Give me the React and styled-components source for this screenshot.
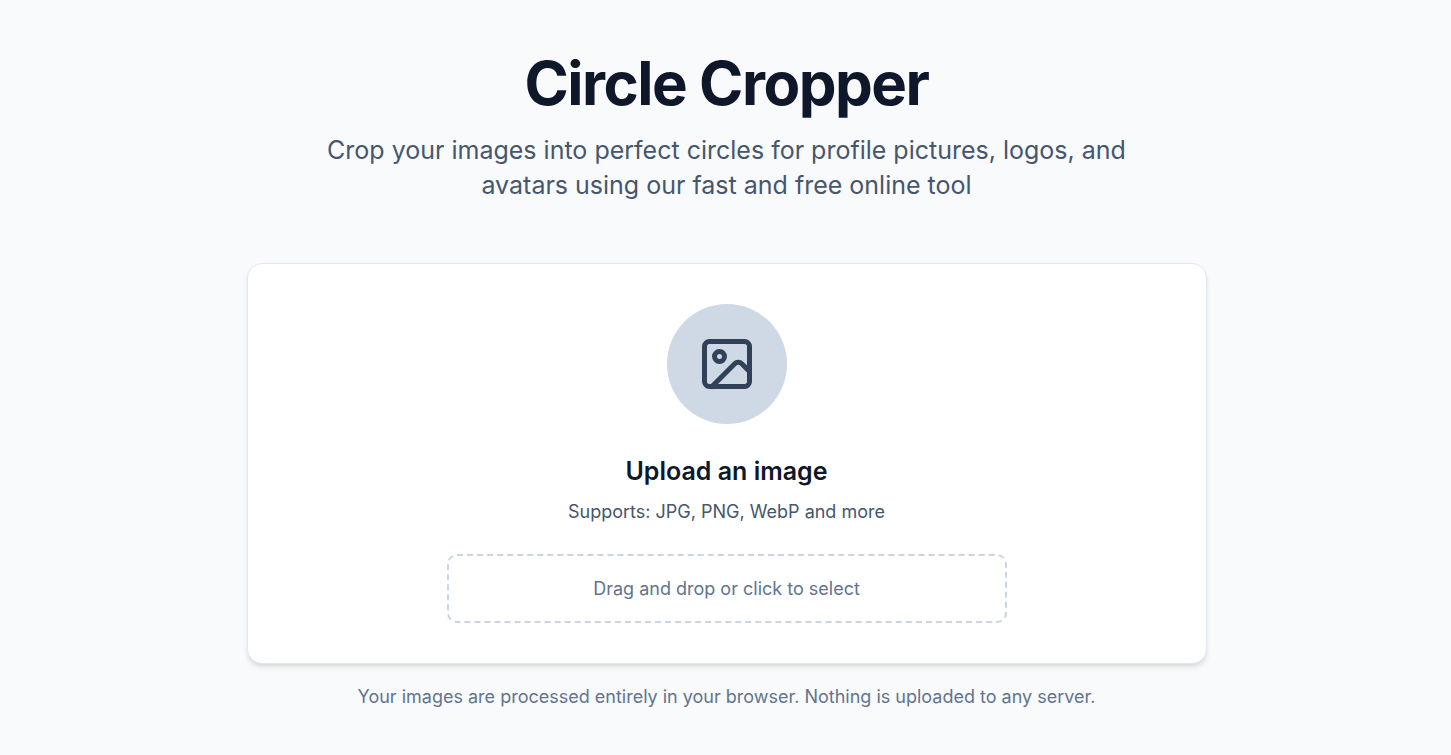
import React from "react";
import styled, { createGlobalStyle } from "styled-components";

const GlobalStyle = createGlobalStyle`
  *, *::before, *::after { box-sizing: border-box; }
  body {
    margin: 0;
    background: #f9fafc;
    color: #0f172a;
    font-family: Inter, sans-serif;
  }
  h1, h2, p { margin: 0; }
`;

const Page = styled.main`
  display: flex;
  flex-direction: column;
  align-items: center;
  padding: 53px 20px 40px 22px;
`;

const Header = styled.header`
  display: flex;
  flex-direction: column;
  align-items: center;
  gap: 20px;
  width: 100%;
  max-width: 840px;
  margin-bottom: 60px;
  text-align: center;
`;

const Title = styled.h1`
  font-size: 60px;
  line-height: 60px;
  font-weight: 700;
  letter-spacing: -0.025em;
`;

const Lead = styled.p`
  color: #45566e;
  font-size: 25px;
  line-height: 35px;
`;

const Card = styled.section`
  display: flex;
  flex-direction: column;
  align-items: center;
  width: 100%;
  max-width: 960px;
  padding: 40px;
  border: 1px solid #e2e8f0;
  border-radius: 15px;
  background: #ffffff;
  box-shadow: 0 4px 6px -1px rgb(0 0 0 / 0.1), 0 2px 4px -2px rgb(0 0 0 / 0.1);
`;

const IconCircle = styled.div`
  display: grid;
  place-items: center;
  width: 120px;
  height: 120px;
  margin-bottom: 30px;
  border-radius: 50%;
  background: #cfd8e5;
  color: #314158;
`;

const CardTitle = styled.h2`
  margin-bottom: 10px;
  font-size: 25px;
  line-height: 35px;
  font-weight: 600;
`;

const Hint = styled.p`
  margin-bottom: 30px;
  color: #45566e;
  font-size: 18px;
  line-height: 25px;
`;

const DropZone = styled.button`
  width: 100%;
  max-width: 560px;
  padding: 20px;
  border: 2px dashed #cad5e2;
  border-radius: 10px;
  background: transparent;
  color: #62748e;
  font: inherit;
  font-size: 18px;
  line-height: 25px;
  cursor: pointer;
`;

const Note = styled.p`
  margin-top: 20px;
  color: #62748e;
  font-size: 18px;
  line-height: 25px;
  text-align: center;
`;

function ImageIcon() {
  return (
    <svg width="60" height="60" viewBox="0 0 24 24" fill="none" stroke="currentColor"
      strokeWidth="2" strokeLinecap="round" strokeLinejoin="round" aria-hidden="true">
      <rect width="18" height="18" x="3" y="3" rx="2" ry="2" />
      <circle cx="9" cy="9" r="2" />
      <path d="m21 15-3.086-3.086a2 2 0 0 0-2.828 0L6 21" />
    </svg>
  );
}

export default function App() {
  return (
    <>
      <GlobalStyle />
      <Page>
        <Header>
          <Title>Circle Cropper</Title>
          <Lead>
            Crop your images into perfect circles for profile pictures, logos, and avatars using our fast and free online tool
          </Lead>
        </Header>
        <Card>
          <IconCircle><ImageIcon /></IconCircle>
          <CardTitle>Upload an image</CardTitle>
          <Hint>Supports: JPG, PNG, WebP and more</Hint>
          <DropZone type="button">Drag and drop or click to select</DropZone>
        </Card>
        <Note>Your images are processed entirely in your browser. Nothing is uploaded to any server.</Note>
      </Page>
    </>
  );
}
